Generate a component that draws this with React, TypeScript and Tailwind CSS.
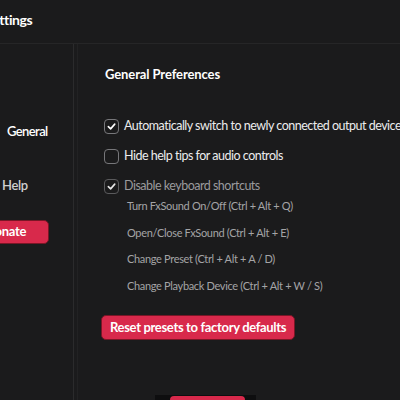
import React from "react";

function Check({ checked, dim }: { checked: boolean; dim?: boolean }) {
  return (
    <div
      className={`w-[15px] h-[15px] rounded-[4px] border flex items-center justify-center shrink-0 ${
        dim ? "border-[#5a5a5c]" : "border-[#77777a]"
      }`}
    >
      {checked && (
        <svg width="9" height="9" viewBox="0 0 10 10" fill="none">
          <path
            d="M1.5 5.2 L4 7.6 L8.6 2.4"
            stroke={dim ? "#e6e6e6" : "#ffffff"}
            strokeWidth="1.8"
            strokeLinecap="round"
            strokeLinejoin="round"
          />
        </svg>
      )}
    </div>
  );
}

export default function App() {
  return (
    <div
      className="w-[400px] h-[400px] overflow-hidden bg-[#1b1b1c] relative flex flex-col"
      style={{ fontFamily: "Lato, 'Noto Sans', sans-serif" }}
    >
      <div className="h-[44px] shrink-0 border-b border-[#262627] flex items-start pt-[9px]">
        <span className="ml-[-15px] text-[14px] font-bold text-white whitespace-nowrap tracking-[-0.4px]">Settings</span>
      </div>
      <div className="flex flex-1 min-h-0">
        <div className="w-[74px] shrink-0 border-r border-[#2b2b2c] flex flex-col">
          <div className="mt-[78px] ml-[7px] text-[13px] font-semibold text-white whitespace-nowrap leading-[18px] tracking-[-0.6px]">
            General
          </div>
          <div className="mt-[36px] ml-[2px] text-[13px] font-semibold text-[#cfcfcf] whitespace-nowrap leading-[18px] tracking-[-0.4px]">
            Help
          </div>
          <div className="mt-[26px] ml-[-30px] w-[79px] h-[24px] rounded-[5px] bg-[#d8294b] border border-[#7a1626] flex items-center pl-[14px]">
            <span className="text-[13px] font-bold text-white whitespace-nowrap tracking-[-0.3px]">Donate</span>
          </div>
        </div>
        <div className="w-[4px] shrink-0 border-r border-[#222223]" />
        <div className="flex-1 flex flex-col pl-[27px] pt-[21px] min-w-0">
          <div className="text-[13px] font-bold text-white whitespace-nowrap leading-[18px] tracking-[-0.1px]">
            General Preferences
          </div>
          <div className="mt-[28px] ml-[-1px] flex flex-col tracking-[-0.5px]">
            <div className="h-[30px] flex items-center gap-[5px]">
              <Check checked />
              <span className="text-[12.5px] text-[#ececec] whitespace-nowrap">
                Automatically switch to newly connected output devices
              </span>
            </div>
            <div className="h-[30px] flex items-center gap-[5px]">
              <Check checked={false} />
              <span className="text-[12.5px] text-[#ececec] whitespace-nowrap">Hide help tips for audio controls</span>
            </div>
            <div className="h-[30px] flex items-center gap-[5px]">
              <Check checked dim />
              <span className="text-[12.5px] text-[#9a9a9c] whitespace-nowrap">Disable keyboard shortcuts</span>
            </div>
          </div>
          <div className="mt-[-8px] ml-[22px] flex flex-col text-[11px] text-[#a4a4a6] whitespace-nowrap tracking-[-0.33px]">
            <div className="h-[27px] flex items-center">Turn FxSound On/Off (Ctrl + Alt + Q)</div>
            <div className="h-[26px] flex items-center">Open/Close FxSound (Ctrl + Alt + E)</div>
            <div className="h-[27px] flex items-center">Change Preset (Ctrl + Alt + A / D)</div>
            <div className="h-[27px] flex items-center">Change Playback Device (Ctrl + Alt + W / S)</div>
          </div>
          <div className="mt-[14px] ml-[-4px]">
            <div className="inline-flex items-center h-[25px] px-[8px] rounded-[5px] bg-[#d8294b] border border-[#7a1626]">
              <span className="text-[13px] font-bold text-white whitespace-nowrap tracking-[-0.33px]">
                Reset presets to factory defaults
              </span>
            </div>
          </div>
        </div>
      </div>
      <div className="absolute left-[155px] top-[395px] w-[101px] h-[10px] bg-[#0e0e0f]">
        <div className="ml-[15px] mt-[1px] w-[75px] h-[10px] rounded-t-[4px] bg-[#d8294b]" />
      </div>
    </div>
  );
}
